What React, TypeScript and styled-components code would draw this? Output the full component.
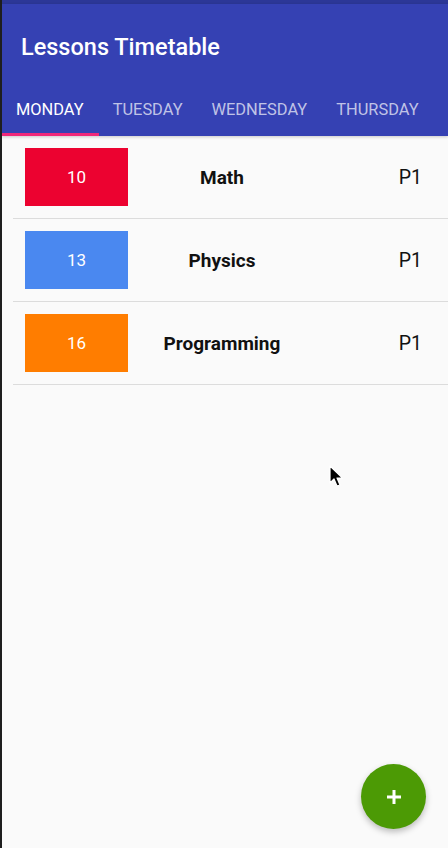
import React from 'react';
import styled, { createGlobalStyle } from 'styled-components';

const lessons = [
    { time: '10', name: 'Math', color: '#ec0230', period: 'P1' },
    { time: '13', name: 'Physics', color: '#4a88f0', period: 'P1' },
    { time: '16', name: 'Programming', color: '#ff7d00', period: 'P1' },
];

const days = ['Monday', 'Tuesday', 'Wednesday', 'Thursday'];

const App = () => {
    return (
        <Screen>
            <GlobalStyle />
            <StatusBar />
            <AppBar>
                <Toolbar>
                    <Title>Lessons Timetable</Title>
                </Toolbar>
                <Tabs>
                    {days.map((day, i) => (
                        <Tab key={day} active={i === 0}>
                            {day}
                        </Tab>
                    ))}
                </Tabs>
            </AppBar>
            <List>
                {lessons.map((lesson) => (
                    <Row key={lesson.name}>
                        <TimeBox color={lesson.color}>{lesson.time}</TimeBox>
                        <Subject>{lesson.name}</Subject>
                        <Period>{lesson.period}</Period>
                    </Row>
                ))}
            </List>
            <Cursor width='16' height='24' viewBox='0 0 16 24'>
                <path
                    d='M1 1 L1 18 L5 14 L8 21 L11 20 L8 13 L13.5 13 Z'
                    fill='#000'
                    stroke='#fff'
                    strokeWidth='1.2'
                    strokeLinejoin='round'
                />
            </Cursor>
            <Fab>
                <svg width='18' height='18' viewBox='0 0 18 18'>
                    <path d='M9 2 V16 M2 9 H16' stroke='#fff' strokeWidth='3' />
                </svg>
            </Fab>
        </Screen>
    );
};

const GlobalStyle = createGlobalStyle`
    html, body {
        margin: 0;
        padding: 0;
        background: #fafafa;
    }
    * {
        box-sizing: border-box;
    }
`;

const Screen = styled.div`
    position: relative;
    min-height: 100vh;
    overflow: hidden;
    background: #fafafa;
    border-left: 2px solid #1e1e1e;
    font-family: Roboto, 'Liberation Sans', sans-serif;
`;

const StatusBar = styled.div`
    height: 4px;
    background: #2c3797;
`;

const AppBar = styled.header`
    background: #3541b3;
    box-shadow: 0 1px 3px rgba(0, 0, 0, 0.2);
`;

const Toolbar = styled.div`
    height: 85px;
    display: flex;
    align-items: center;
    padding-left: 19px;
`;

const Title = styled.h1`
    margin: 0;
    color: #fff;
    font-size: 23.5px;
    font-weight: 500;
    padding-top: 1px;
`;

const Tabs = styled.nav`
    display: flex;
    height: 47px;
    white-space: nowrap;
`;

const Tab = styled.div<{ active?: boolean }>`
    display: flex;
    align-items: center;
    padding: 0 15px 4px 14px;
    font-size: 16.4px;
    text-transform: uppercase;
    color: ${(p) => (p.active ? '#ffffff' : 'rgba(255, 255, 255, 0.7)')};
    border-bottom: 3px solid ${(p) => (p.active ? '#f0287a' : 'transparent')};
`;

const List = styled.div`
    padding-left: 11px;
`;

const Row = styled.div`
    display: flex;
    align-items: center;
    padding: 12px 0 12px 12px;
    border-bottom: 1px solid #dcdcdc;
`;

const TimeBox = styled.div<{ color: string }>`
    width: 103px;
    height: 58px;
    background: ${(p) => p.color};
    color: #fff;
    font-size: 17px;
    display: flex;
    align-items: center;
    justify-content: center;
`;

const Subject = styled.div`
    width: 188px;
    text-align: center;
    font-size: 19px;
    font-weight: 700;
    color: #111;
`;

const Period = styled.div`
    margin-left: auto;
    padding-right: 26px;
    font-size: 19.5px;
    color: #111;
`;

const Cursor = styled.svg`
    position: absolute;
    left: 327px;
    top: 465px;
`;

const Fab = styled.button`
    position: absolute;
    right: 22px;
    bottom: 19px;
    width: 65px;
    height: 65px;
    border: none;
    border-radius: 50%;
    background: #4c9a05;
    display: flex;
    align-items: center;
    justify-content: center;
    box-shadow: 0 3px 6px rgba(0, 0, 0, 0.25);
`;

export default App;
